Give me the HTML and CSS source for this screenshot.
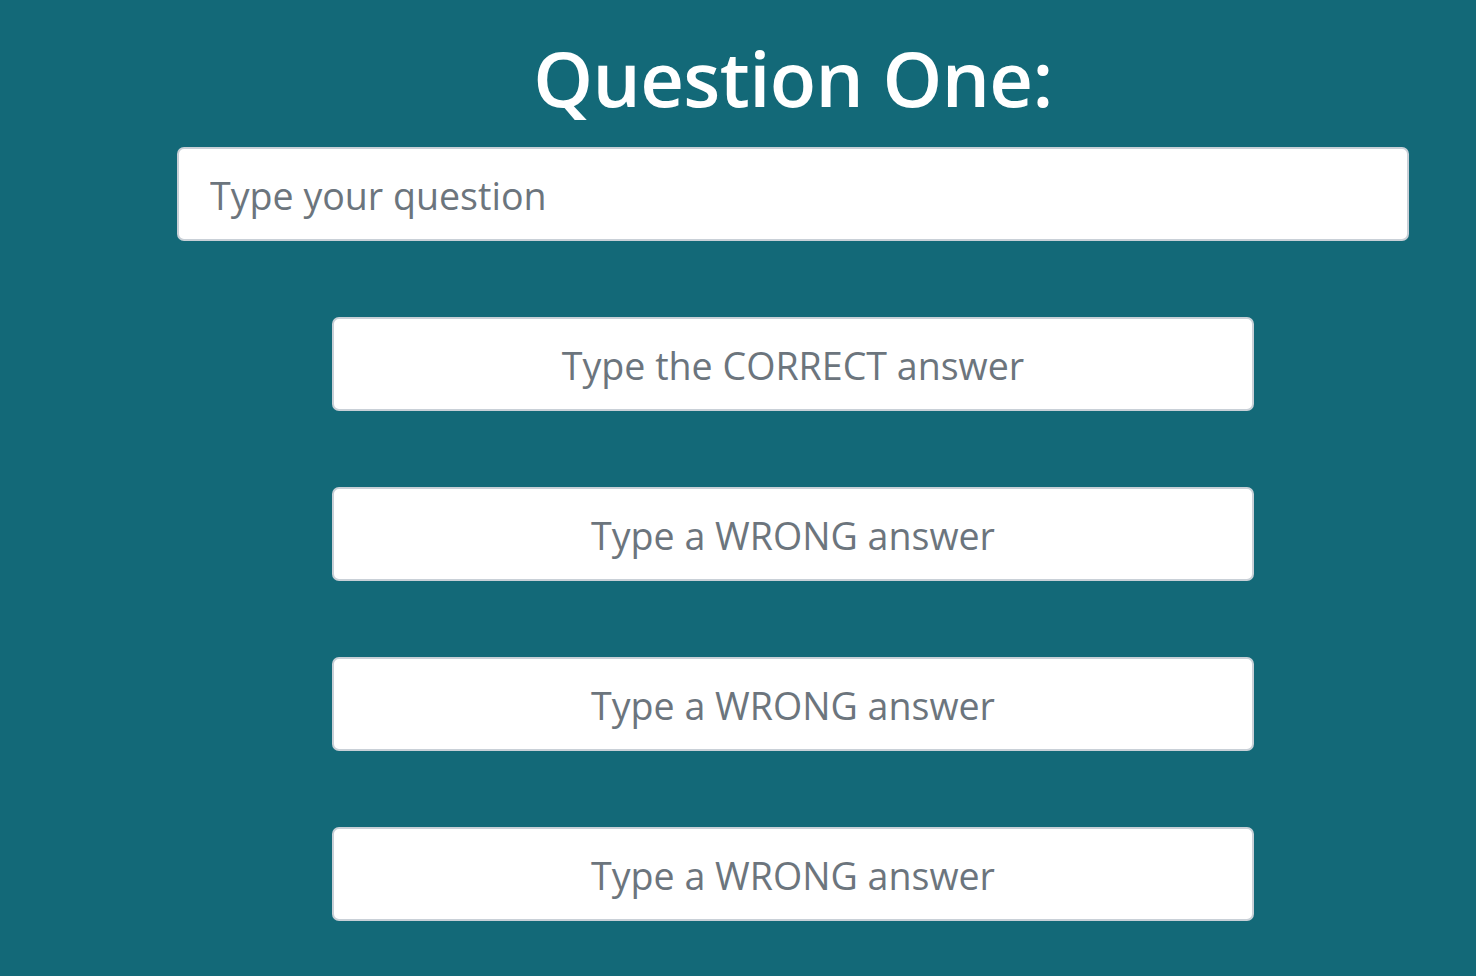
FILE: index.html
```html
<!DOCTYPE html>
<html>
<head>
<meta charset="utf-8">
<link rel="stylesheet" href="styles.css">
</head>
<body>
<main class="quiz">
  <h1 class="title">Question One:</h1>
  <input class="field field-question" type="text" placeholder="Type your question">
  <div class="answers">
    <input class="field field-answer" type="text" placeholder="Type the CORRECT answer">
    <input class="field field-answer" type="text" placeholder="Type a WRONG answer">
    <input class="field field-answer" type="text" placeholder="Type a WRONG answer">
    <input class="field field-answer" type="text" placeholder="Type a WRONG answer">
  </div>
</main>
</body>
</html>
```
FILE: styles.css
```css
html, body {
  margin: 0;
  padding: 0;
  background: #136978;
  height: 100%;
  overflow: hidden;
}
body {
  font-family: "Open Sans", "Noto Sans", sans-serif;
}
.quiz {
  width: 1232px;
  margin-left: 177px;
  display: flex;
  flex-direction: column;
  align-items: center;
}
.title {
  margin: 17px 0 9px;
  font-size: 76px;
  font-weight: 600;
  line-height: 121px;
  color: #ffffff;
  letter-spacing: -0.6px;
}
.field {
  box-sizing: border-box;
  height: 94px;
  background: #ffffff;
  border: 2px solid #c9d0d7;
  border-radius: 7px;
  font-family: "Open Sans", "Noto Sans", sans-serif;
  font-size: 37.6px;
  color: #495057;
  outline: none;
}
.field::placeholder {
  color: #6c757d;
  opacity: 1;
}
.field-question {
  width: 1232px;
  padding: 2px 31px 0;
}
.answers {
  margin-top: 76px;
  display: flex;
  flex-direction: column;
  gap: 76px;
}
.field-answer {
  width: 922px;
  text-align: center;
  padding: 2px 20px 0;
}
```
